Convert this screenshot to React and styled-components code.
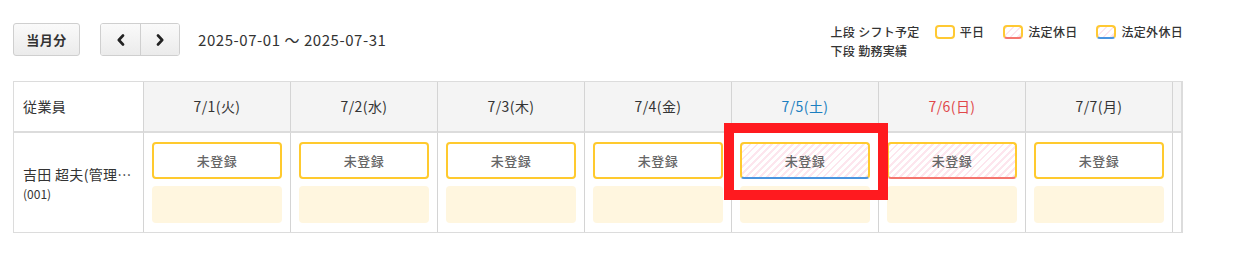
import React from "react";
import styled, { createGlobalStyle, css } from "styled-components";

const days = [
  { label: "7/1(火)", kind: "weekday" },
  { label: "7/2(水)", kind: "weekday" },
  { label: "7/3(木)", kind: "weekday" },
  { label: "7/4(金)", kind: "weekday" },
  { label: "7/5(土)", kind: "extra", marked: true },
  { label: "7/6(日)", kind: "legal" },
  { label: "7/7(月)", kind: "weekday" },
  { label: "7/8(火)", kind: "weekday" },
];

const App = () => {
  return (
    <>
      <GlobalStyle />
      <Page>
        <TopBar>
          <Controls>
            <Button>当月分</Button>
            <ButtonGroup>
              <ArrowButton aria-label="前月">
                <Chevron viewBox="0 0 10 12">
                  <path d="M7 1.5 L2.8 6 L7 10.5" />
                </Chevron>
              </ArrowButton>
              <ArrowButton aria-label="翌月">
                <Chevron viewBox="0 0 10 12">
                  <path d="M3 1.5 L7.2 6 L3 10.5" />
                </Chevron>
              </ArrowButton>
            </ButtonGroup>
            <Period>2025-07-01 ～ 2025-07-31</Period>
          </Controls>
          <Legend>
            <LegendNote>
              <div>上段 シフト予定</div>
              <div>下段 勤務実績</div>
            </LegendNote>
            <LegendItem>
              <Swatch kind="weekday" />
              平日
            </LegendItem>
            <LegendItem>
              <Swatch kind="legal" />
              法定休日
            </LegendItem>
            <LegendItem>
              <Swatch kind="extra" />
              法定外休日
            </LegendItem>
          </Legend>
        </TopBar>

        <TableWrap>
          <Grid>
            <HeadCell first>従業員</HeadCell>
            {days.map((d) => (
              <HeadCell key={d.label} kind={d.kind}>
                {d.label}
              </HeadCell>
            ))}

            <NameCell>
              <Name>吉田 超夫(管理者)</Name>
              <Code>(001)</Code>
            </NameCell>
            {days.map((d) => (
              <DayCell key={d.label}>
                <ShiftBox kind={d.kind}>未登録</ShiftBox>
                <ResultBox />
                {d.marked && <Highlight />}
              </DayCell>
            ))}
          </Grid>
        </TableWrap>
      </Page>
    </>
  );
};

export default App;

// Styled here

const GlobalStyle = createGlobalStyle`
  body {
    margin: 0;
    background: #fff;
    font-family: "Noto Sans CJK JP", "Noto Sans", sans-serif;
    color: #333;
  }
`;

const Page = styled.div`
  width: 1170px;
  padding: 23px 0 0 13px;
`;

const TopBar = styled.div`
  display: flex;
  justify-content: space-between;
  align-items: flex-start;
  height: 58px;
`;

const Controls = styled.div`
  display: flex;
  align-items: center;
  height: 33px;
`;

const buttonBase = css`
  height: 33px;
  box-sizing: border-box;
  border: 1px solid #cfcfcf;
  background: linear-gradient(#fafafa, #ebebeb);
  color: #333;
  font-family: inherit;
  cursor: pointer;
  padding: 0;
`;

const Button = styled.button`
  ${buttonBase};
  width: 67px;
  border-radius: 3px;
  font-size: 13px;
  font-weight: 700;
  letter-spacing: 0.5px;
`;

const ButtonGroup = styled.div`
  display: flex;
  margin-left: 20px;
  border-radius: 3px;
  overflow: hidden;
  border: 1px solid #cfcfcf;
`;

const ArrowButton = styled.button`
  ${buttonBase};
  height: 31px;
  width: 39px;
  border: none;
  display: flex;
  align-items: center;
  justify-content: center;
  & + & {
    border-left: 1px solid #cfcfcf;
  }
`;

const Chevron = styled.svg`
  width: 10px;
  height: 12px;
  fill: none;
  stroke: #222;
  stroke-width: 2.6;
  stroke-linecap: round;
  stroke-linejoin: round;
`;

const Period = styled.div`
  margin-left: 18px;
  font-size: 15px;
  color: #333;
  letter-spacing: 0.55px;
`;

const Legend = styled.div`
  display: flex;
  align-items: flex-start;
  font-size: 12px;
  font-weight: 500;
  color: #333;
  line-height: 19px;
  letter-spacing: 0.3px;
  margin-top: -1px;
`;

const LegendNote = styled.div`
  margin-right: 15px;
`;

const LegendItem = styled.div`
  display: flex;
  align-items: center;
  height: 19px;
  gap: 5px;
  & + & {
    margin-left: 19px;
  }
`;

const hatch = css`
  background: repeating-linear-gradient(
    135deg,
    #fde6ee 0 2px,
    #fff 2px 5px
  );
`;

const accent = {
  legal: "#f5766f",
  extra: "#4a95e0",
};

const Swatch = styled.span`
  display: inline-block;
  width: 20px;
  height: 14px;
  box-sizing: border-box;
  border: 2px solid #ffc933;
  border-radius: 4px;
  ${(p) => p.kind !== "weekday" && hatch};
  ${(p) =>
    accent[p.kind] &&
    css`
      border-bottom-color: ${accent[p.kind]};
    `};
`;

const TableWrap = styled.div`
  width: 1170px;
  box-sizing: border-box;
  border: 1px solid #dcdcdc;
  border-right-width: 2px;
  overflow: hidden;
`;

const Grid = styled.div`
  display: grid;
  grid-template-columns: 130px repeat(8, 147px);
  grid-template-rows: 51px 99px;
`;

const dayColor = {
  weekday: "#333",
  extra: "#1b7fc0",
  legal: "#e0484a",
};

const HeadCell = styled.div`
  display: flex;
  align-items: center;
  justify-content: ${(p) => (p.first ? "flex-start" : "center")};
  padding: ${(p) => (p.first ? "0 0 0 9px" : "0")};
  padding-bottom: 1px;
  box-sizing: border-box;
  background: ${(p) => (p.first ? "#fff" : "#f4f4f4")};
  border-bottom: 2px solid #dcdcdc;
  border-right: 1px solid #d4d4d4;
  font-size: 14px;
  letter-spacing: 0.4px;
  color: ${(p) => (p.first ? "#333" : dayColor[p.kind])};
`;

const NameCell = styled.div`
  display: flex;
  flex-direction: column;
  justify-content: center;
  padding: 2px 10px 0 9px;
  box-sizing: border-box;
  border-right: 1px solid #d4d4d4;
  min-width: 0;
`;

const Name = styled.div`
  font-size: 14px;
  line-height: 20px;
  color: #333;
  letter-spacing: 0.3px;
  white-space: nowrap;
  overflow: hidden;
  text-overflow: ellipsis;
`;

const Code = styled.div`
  font-size: 12px;
  line-height: 20px;
  color: #333;
`;

const DayCell = styled.div`
  position: relative;
  display: flex;
  flex-direction: column;
  gap: 7px;
  padding: 9px 8px;
  box-sizing: border-box;
  border-right: 1px solid #d4d4d4;
`;

const ShiftBox = styled.div`
  height: 37px;
  box-sizing: border-box;
  border: 2px solid #ffca2e;
  border-radius: 4px;
  display: flex;
  align-items: center;
  justify-content: center;
  font-size: 13px;
  font-weight: 500;
  letter-spacing: 0.5px;
  color: #666;
  background: #fff;
  ${(p) => p.kind !== "weekday" && hatch};
  ${(p) =>
    accent[p.kind] &&
    css`
      border-bottom-color: ${accent[p.kind]};
    `};
`;

const ResultBox = styled.div`
  height: 37px;
  border-radius: 4px;
  background: #fff6df;
`;

const Highlight = styled.div`
  position: absolute;
  left: -8px;
  top: -10px;
  width: 164px;
  height: 77px;
  box-sizing: border-box;
  border: 10px solid #ff1a1f;
  pointer-events: none;
  z-index: 2;
`;
